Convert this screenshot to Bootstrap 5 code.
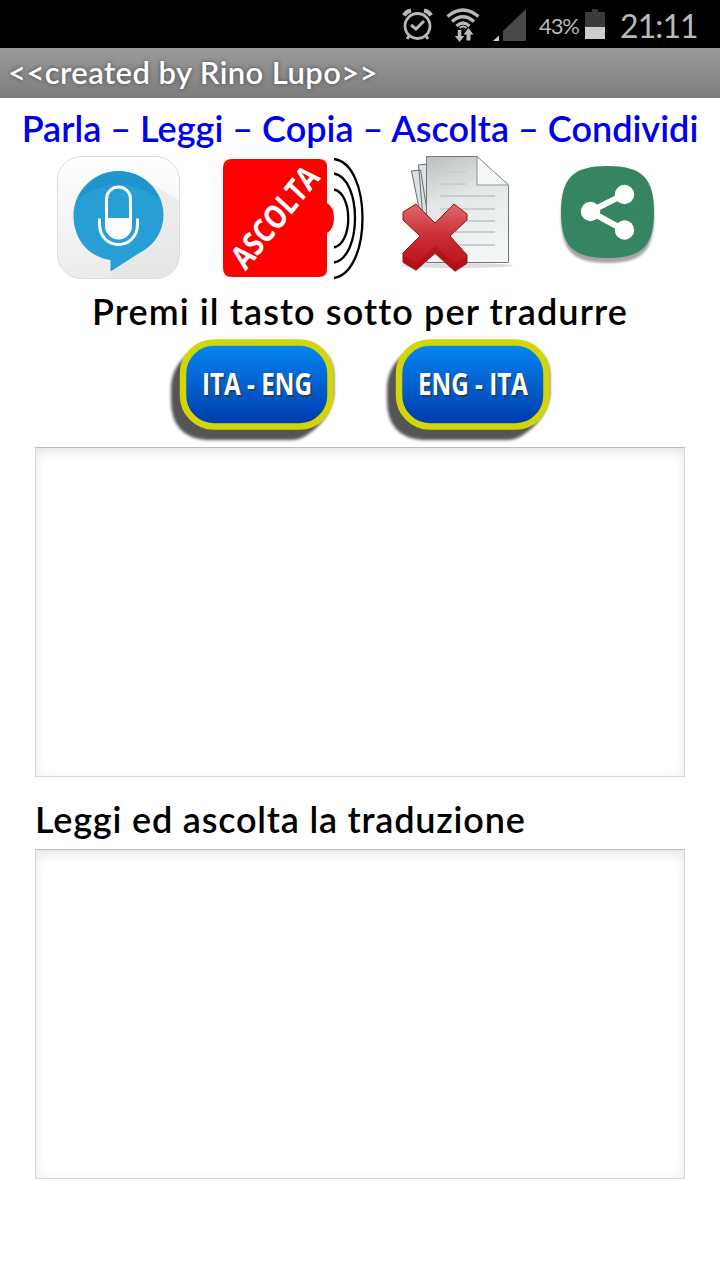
<!DOCTYPE html>
<html lang="it">
<head>
<meta charset="utf-8">
<meta name="viewport" content="width=device-width, initial-scale=1">
<title>Traduttore</title>
<link href="https://cdn.jsdelivr.net/npm/bootstrap@5.3.0/dist/css/bootstrap.min.css" rel="stylesheet">
<style>
body{font-family:Lato,"Noto Sans",sans-serif;color:#000;background:#fff;width:720px;height:1280px;overflow:hidden}
.status{height:48px;background:#000;color:#b9b9b9;padding-right:22px}
.pct{font-size:22px;width:41px;letter-spacing:-1.1px;line-height:48px;padding:4px 0 0 1px}
.clock{font-size:32px;line-height:48px;letter-spacing:-.9px;width:78px;padding-top:4px}
.titlebar{height:50px;background:linear-gradient(#9b9b9b,#7d7d7d);color:#fff;font-size:31px;font-weight:600;line-height:49px;padding-left:8px;letter-spacing:.4px;text-shadow:0 0 4px #444;white-space:nowrap}
.line{font-weight:600;white-space:nowrap;font-variant-ligatures:none}
.head{height:57px;color:#0000ee;font-size:36px;line-height:60px}
.tools{height:127px;padding-left:55px}
.prompt{height:55px;font-size:36px;line-height:58px;letter-spacing:1.1px}
.langs{height:110px;padding-left:169px}
.langs button,.tools button{background:none}
.box{margin:0 35px;width:650px;height:330px;border:1px solid #d8d8d8;border-top-color:#bcbcbc;border-radius:0;resize:none;box-shadow:inset 0 7px 14px -5px #e0e0e0,inset 0 0 12px #f6f6f6}
.caption{height:72px;font-size:36px;line-height:84px;padding-left:35px;letter-spacing:.8px}
svg text{font-family:"Open Sans","Noto Sans",sans-serif;font-weight:700}
svg{display:block;overflow:visible}
</style>
</head>
<body>
<header>
<div class="status d-flex justify-content-end align-items-center">
<svg width="142" height="48" viewBox="396 0 142 48" fill="none" stroke="#b9b9b9">
<circle cx="417.500" cy="26" r="12.500" stroke-width="2.800"/><path d="M411 25l5 4 8-8" stroke-width="3"/><path d="M404 15.500q2-4 7-5M424 10.500q5 1 7 5" stroke-width="4"/><path d="M409 36l-2 3M426 36l2 3" stroke-width="3"/>
<path d="M447.500 16.500Q463 3.500 478.500 16.500M452 21.500Q463 12 474 21.500M456.500 26Q463 20 469.500 26" stroke-width="3.200"/>
<path d="M459.500 28q3.500-3 7 0" stroke-width="2"/>
<path d="M457.800 30h3.500v6h3l-4.700 6-4.700-6h2.900zM466.500 40.500v-6h-3l5-6.500 5 6.500h-3v6z" fill="#b9b9b9" stroke="none"/>
<path d="M493 41l6-5.500V41z" fill="#d0d0d0" stroke="none"/><path d="M503 41V31L526 9v32z" fill="#494949" stroke="none"/>
</svg>
<span class="pct text-nowrap">43%</span>
<svg width="41" height="48" viewBox="579 0 41 48"><path d="M585 12h7V9h6v3h7v15h-20z" fill="#3b3b3b"/><path d="M585 27h20v12h-20z" fill="#ccc"/></svg>
<span class="clock text-nowrap">21:11</span>
</div>
<div class="titlebar">&lt;&lt;created by Rino Lupo&gt;&gt;</div>
</header>
<main>
<div class="line head text-center">Parla – Leggi – Copia – Ascolta – Condividi</div>
<div class="tools d-flex">
<button class="border-0 p-0" aria-label="Parla"><svg width="160" height="127" viewBox="55 155 160 127">
<defs><linearGradient id="g1" x2="0" y2="1"><stop stop-color="#fff"/><stop offset="1" stop-color="#ebebec"/></linearGradient></defs>
<rect x="57.500" y="156.500" width="122" height="122" rx="24" fill="url(#g1)" stroke="#dcdcdc"/>
<path d="M145 180L179 200V255Q179 278 155 278H110z" fill="#dfe0e1" opacity=".45"/>
<path d="M118.500 171c25 0 45 20 45 43.500 0 17-9 31-25 39L110.500 271.500V260C87 257 73.500 237 73.500 216c0-25 20-45 45-45z" fill="#279fd5"/>
<path d="M78 198Q95 171 118 171Q145 171 159 198Q118 172 78 198z" fill="#1c91c8" opacity=".7"/>
<rect x="106.500" y="187" width="24" height="51" rx="12" fill="none" stroke="#fff" stroke-width="3"/><path d="M106 218h25v8a12.500 12.500 0 0 1-25 0z" fill="#fff"/>
<path d="M99.500 218.500v5c0 28 38 28 38 0v-5" fill="none" stroke="#fff" stroke-width="3"/>
</svg></button>
<button class="border-0 p-0" aria-label="Ascolta"><svg width="180" height="127" viewBox="215 155 180 127">
<path d="M232 159h87q8 0 8 8v36q7 4 7 15t-7 15v36q0 8-8 8h-87q-9 0-9-9v-100q0-9 9-9z" fill="#f00"/>
<text transform="translate(245.500 271.500) rotate(-51) skewX(-4)" font-size="32" textLength="120" lengthAdjust="spacingAndGlyphs" fill="#fff">ASCOLTA</text>
<path d="M334 189.500c19 4 19 54 0 58M334 173.500c28 5 28 84 0 89M334 159c38 5 38 113 0 119" fill="none" stroke="#000" stroke-width="2.300"/>
</svg></button>
<button class="border-0 p-0" aria-label="Cancella"><svg width="155" height="127" viewBox="395 155 155 127">
<defs><linearGradient id="g2" x2=".3" y2="1"><stop stop-color="#b9bfc0"/><stop offset=".45" stop-color="#e4e7e7"/><stop offset="1" stop-color="#f3f5f5"/></linearGradient><linearGradient id="g3" x2="0" y2="1"><stop stop-color="#e06a6d"/><stop offset=".45" stop-color="#cc3036"/><stop offset="1" stop-color="#b80c15"/></linearGradient></defs>
<ellipse cx="457" cy="265.500" rx="56" ry="2.500" fill="#ddd"/>
<path d="M411.500 171l9-1 8 50-5 10zM418.500 165l9-1v80l-4-20z" fill="#dde1e1" stroke="#657071"/>
<path d="M426.500 156.500H477L508.500 185V262.500H426.500z" fill="url(#g2)" stroke="#6f7979"/>
<path d="M477 156.500L508.500 185H477z" fill="#f7f8f8" stroke="#8b9595"/>
<path d="M440 172h26M440 184h26M440 196h55M440 209h55M440 221h55M455 232h40M455 245h40" stroke="#c9cece" stroke-width="2"/>
<path d="M403 212l13-8 19 19 19-19 13 10v6l-17 16 17 19v8l-12 8-20-18-19 17-13-8v-9l17-17-17-16z" fill="url(#g3)" stroke="#9d1219"/>
<path d="M403 255l13 9 19-18 20 18 12-8v8l-12 8-20-18-19 17-13-8z" fill="#a50d16" opacity=".5"/>
</svg></button>
<button class="border-0 p-0" aria-label="Condividi"><svg width="110" height="127" viewBox="550 155 110 127">
<defs><filter id="soft" x="-10%" y="-10%" width="120%" height="125%"><feGaussianBlur stdDeviation="1.200"/></filter><path id="sq" d="M607.500 166C642 166 654 178 654 212S642 258 607.500 258 561 246 561 212 573 166 607.500 166z"/></defs>
<use href="#sq" y="5" fill="#888" opacity=".75" filter="url(#soft)"/><use href="#sq" fill="#358462"/>
<path d="M624 194.500L590 211.500 624 230" fill="none" stroke="#fff" stroke-width="6"/><g fill="#fff"><circle cx="624.500" cy="194.500" r="9.700"/><circle cx="590.500" cy="211.500" r="9.700"/><circle cx="624.500" cy="230" r="9.700"/></g>
</svg></button>
</div>
<div class="line prompt text-center">Premi il tasto sotto per tradurre</div>
<div class="langs d-flex">
<button class="border-0 p-0"><svg width="216" height="110" viewBox="169 337 216 110">
<defs><linearGradient id="g4" x2="0" y2="1"><stop stop-color="#0588f2"/><stop offset="1" stop-color="#0038aa"/></linearGradient><filter id="sh" x="-10%" y="-10%" width="120%" height="125%"><feGaussianBlur stdDeviation="1.500"/></filter>
<g id="pill"><path d="M210 342L305 342Q333 350 334 375V395Q330 420 307 435Q300 440 290 440H207Q171 438 171 400V385Q174 355 210 342z" fill="#555" filter="url(#sh)"/><rect x="183" y="342.500" width="147.500" height="84" rx="31" fill="url(#g4)" stroke="#d3d606" stroke-width="6.500"/></g></defs>
<use href="#pill"/><text x="203.500" y="396.500" font-size="30" fill="#333" opacity=".7" textLength="110" lengthAdjust="spacingAndGlyphs" aria-hidden="true">ITA - ENG</text><text x="202" y="394.500" font-size="30" fill="#fff" textLength="110" lengthAdjust="spacingAndGlyphs">ITA - ENG</text>
</svg></button>
<button class="border-0 p-0"><svg width="170" height="110" viewBox="385 337 170 110">
<use href="#pill" x="216"/><text x="419.500" y="396.500" font-size="30" fill="#333" opacity=".7" textLength="110" lengthAdjust="spacingAndGlyphs" aria-hidden="true">ENG - ITA</text><text x="418" y="394.500" font-size="30" fill="#fff" textLength="110" lengthAdjust="spacingAndGlyphs">ENG - ITA</text>
</svg></button>
</div>
<textarea class="box d-block" aria-label="Testo"></textarea>
<div class="line caption">Leggi ed ascolta la traduzione</div>
<textarea class="box d-block" aria-label="Traduzione"></textarea>
</main>
<script src="https://cdn.jsdelivr.net/npm/bootstrap@5.3.0/dist/js/bootstrap.bundle.min.js"></script>
</body>
</html>
